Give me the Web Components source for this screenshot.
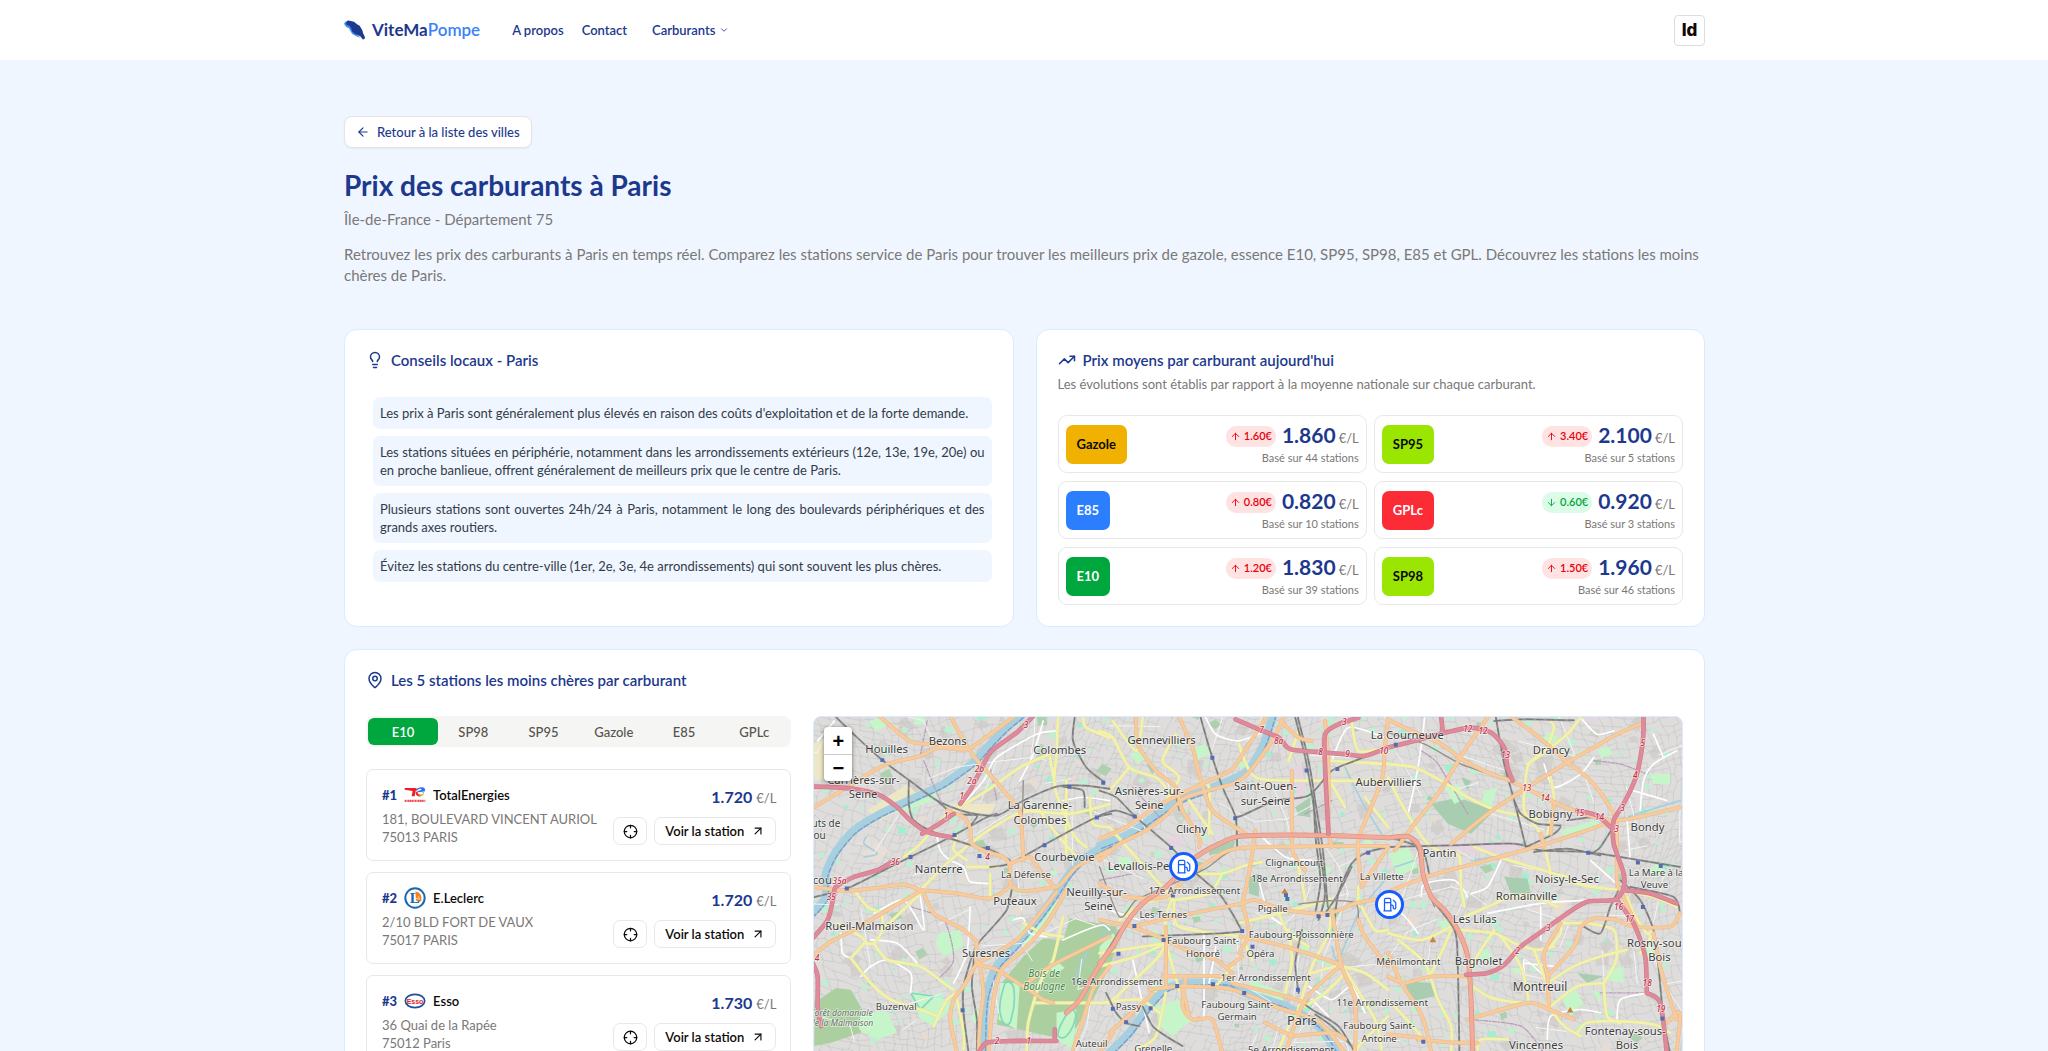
<!DOCTYPE html>
<html lang="fr">
<head>
<meta charset="utf-8">
<meta name="viewport" content="width=device-width, initial-scale=1">
<title>Prix des carburants à Paris - ViteMaPompe</title>
<style>
  :root {
    --navy: #1c398e;
    --muted: #7b7876;
    --line: #e8e8e8;
    --sky: #eff6ff;
    --sky-line: #dbeafe;
  }
  body {
    margin: 0;
    background: var(--sky);
    color: #0c0a09;
    font-family: Lato, "Open Sans", sans-serif;
    font-size: 13px;
    line-height: 18px;
  }
</style>
</head>
<body>
<fuel-page></fuel-page>

<script>
const ICONS = {
  left: '<path d="m12 19-7-7 7-7"/><path d="M19 12H5"/>',
  bulb: '<path d="M15 14c.2-1 .7-1.7 1.5-2.5 1-.9 1.5-2.2 1.5-3.5A6 6 0 0 0 6 8c0 1 .2 2.2 1.5 3.5.7.7 1.3 1.5 1.5 2.5"/><path d="M9 18h6"/><path d="M10 22h4"/>',
  trend: '<path d="M22 7l-8.500 8.500-5-5L2 17"/><path d="M16 7h6v6"/>',
  pin: '<path d="M20 10c0 5-5.500 10.200-7.400 11.800a1 1 0 0 1-1.200 0C9.500 20.200 4 15 4 10a8 8 0 0 1 16 0"/><circle cx="12" cy="10" r="3"/>',
  up: '<path d="m5 12 7-7 7 7"/><path d="M12 19V5"/>',
  down: '<path d="M12 5v14"/><path d="m19 12-7 7-7-7"/>',
  out: '<path d="M7 7h10v10"/><path d="M7 17 17 7"/>',
  chevron: '<path d="m6 9 6 6 6-6"/>',
  target: '<circle cx="12" cy="12" r="10"/><path d="M22 12h-4M6 12H2M12 6V2M12 22v-4"/>',
  fuel: '<path d="M3 22h12M4 9h10M14 22V4a2 2 0 0 0-2-2H6a2 2 0 0 0-2 2v18"/><path d="M14 13h2a2 2 0 0 1 2 2v2a2 2 0 0 0 4 0V9.830a2 2 0 0 0-.590-1.420L18 5"/>'
};
const BRANDS = {
  total: '<svg width="22" height="18" viewBox="0 0 66 54"><path d="M2 6h32l10 5-9 3-3 17h-9l3-16L2 11z" fill="#ef1c24"/><path d="M35 13C39 3 60 0 63 9c1 7-5 8-12 9l-12 1c1-5 8-5 13-7 3-2-2-6-8-3-4 1-6 4-9 4z" fill="#2f6df6"/><path d="M63 8c1 8-5 11-13 11l9 1c3-2 5-7 4-12z" fill="#27b5e8"/><path d="M35 17h6c-1 6 2 9 8 8l-2 6c-8 0-13-5-12-14z" fill="#ef1c24"/><path d="M46 26c6 0 10-2 12-5l2 3c-4 6-9 8-14 7z" fill="#f7a81b"/><path d="M38 26c3 4 10 5 17 2-5 5-13 5-17-2z" fill="#49b649"/><path d="M2 43h62M2 46h62" stroke="#e8323a" stroke-width="3" stroke-dasharray="5 1 3 1"/></svg>',
  leclerc: '<svg width="22" height="22" viewBox="0 0 66 66"><circle cx="33" cy="33" r="29" fill="#fff" stroke="#1769b5" stroke-width="6"/><path d="M34 14C44 13 51 21 52 31v10l-8 4-8-5z" fill="#f58220"/><path d="M43 28l4 10m-12-5l9 4" stroke="#fff" stroke-width="2"/><text x="17" y="49" font-family="Liberation Serif" font-weight="700" font-size="45" fill="#1769b5">L</text></svg>',
  esso: '<svg width="22" height="16" viewBox="0 0 66 48"><ellipse cx="33" cy="24" rx="29" ry="20" fill="#fff" stroke="#1d4fa0" stroke-width="5"/><text x="33" y="32" text-anchor="middle" font-family="Liberation Sans" font-weight="700" font-size="21" fill="#e1202c">Esso</text></svg>'
};

class Base extends HTMLElement {
  constructor() {
    super();
    this.attachShadow({ mode: 'open' });
  }
  connectedCallback() {
    this.shadowRoot.innerHTML = `<style>*{box-sizing:border-box}button{font:inherit;color:inherit;cursor:pointer}${this.css()}</style>${this.html()}`;
  }
  a(name) { return this.getAttribute(name) || ''; }
}
const define = (name, css, html) => customElements.define(name, class extends Base {
  css() { return css; }
  html() { return html(this); }
});

define('ui-icon', `
  :host { display: inline-flex; flex: none; }
  svg { display: block; }
`, e => `<svg aria-hidden="true" width="${e.a('size')}" height="${e.a('size')}" viewBox="0 0 24 24" fill="none" stroke="currentColor" stroke-width="${e.a('weight') || 2}" stroke-linecap="round" stroke-linejoin="round">${ICONS[e.a('name')]}</svg>`);

define('site-header', `
  :host { display: block; background: #fff; color: var(--navy); }
  header { max-width: 1402px; height: 60px; margin: 0 auto; padding: 0 20px 0 21px; display: flex; align-items: center; justify-content: space-between; }
  .left, .brand, nav, nav button { display: flex; align-items: center; }
  .left { gap: 32px; }
  a { color: inherit; text-decoration: none; }
  .brand { gap: 7px; font-size: 17px; font-weight: 700; line-height: 24px; }
  .brand b { color: #3b82f6; font-weight: 600; }
  nav { font-weight: 600; gap: 18px; }
  nav button { border: 0; background: none; padding: 0 0 0 7px; gap: 4px; }
  .id { width: 31px; height: 31px; border: 1px solid #ddd; border-radius: 4px; background: #fff; padding: 0; color: #120606; font: 800 17px/24px Inter, sans-serif; }
`, () => `<header>
  <div class="left">
    <a class="brand" href="#"><svg width="21" height="20" viewBox="0 0 63 60"><path d="M0 11 5 4l14 13 9 18 13 11 10 8-14-5-13-8-9-16-9-5z" fill="#3b8bff"/><path d="M8 4Q11 0 17 2l13 3 9 8 8 4 8 14 2 8 6 13q0 7-7 6l-7-9-15-7-9-7-3-8-5-9-9-4q-3-3-1-7z" fill="#1c398e"/></svg><span>ViteMa<b>Pompe</b></span></a>
    <nav><a href="#">A propos</a><a href="#">Contact</a><button type="button">Carburants <ui-icon name="chevron" size="10"></ui-icon></button></nav>
  </div>
  <button class="id" type="button">Id</button>
</header>`);

define('ui-card', `
  :host { display: block; background: #fff; border: 1px solid var(--sky-line); border-radius: 13px; padding: 19px 21px 21px; }
  h2 { display: flex; align-items: center; gap: 7px; height: 22px; margin: 0; font-size: 15px; font-weight: 600; line-height: 22px; color: var(--navy); }
`, e => `<h2><ui-icon name="${e.a('icon')}" size="18"></ui-icon>${e.a('heading')}</h2><slot></slot>`);

define('tip-list', `
  :host { display: block; padding: 26px 0 0 7px; }
  ul { margin: 0; padding: 0; list-style: none; display: grid; gap: 7px; }
  ::slotted(li) { padding: 7px; border-radius: 7px; background: var(--sky); color: #333b47; text-align: justify; list-style: none; }
`, () => '<ul><slot></slot></ul>');

define('fuel-price', `
  :host { display: flex; justify-content: space-between; align-items: center; height: 58px; padding: 0 7px; border: 1px solid var(--line); border-radius: 9px; }
  .badge { height: 39px; display: flex; align-items: center; padding: 0 11px; border-radius: 7px; font-weight: 700; }
  .badge.gazole { background: #f0b100; }
  .badge.sp95, .badge.sp98 { background: #9ae600; }
  .badge.e85 { background: #2b7fff; color: #fff; }
  .badge.gplc { background: #fb2c36; color: #fff; }
  .badge.e10 { background: #00a63e; color: #fff; }
  .info { text-align: right; }
  .row { display: flex; align-items: center; justify-content: flex-end; gap: 6px; height: 28px; }
  .delta { display: flex; align-items: center; gap: 3px; height: 21px; padding: 0 4px; border-radius: 10px; font-size: 11px; font-weight: 600; background: #ffe2e2; color: #e7000b; }
  .delta.down { background: #dcfce7; color: #00a63e; }
  .price { display: flex; align-items: baseline; gap: 3px; color: var(--navy); font-size: 21px; line-height: 28px; font-weight: 700; }
  small { color: var(--muted); font-size: 13px; font-weight: 400; }
  .base { color: var(--muted); font-size: 11px; line-height: 16px; }
`, e => `<span class="badge ${e.a('fuel').toLowerCase()}">${e.a('fuel')}</span>
  <div class="info"><div class="row"><span class="delta ${e.a('trend')}"><ui-icon name="${e.a('trend')}" size="11"></ui-icon>${e.a('delta')}</span><span class="price">${e.a('price')} <small>€/L</small></span></div>
  <div class="base">Basé sur ${e.a('count')} stations</div></div>`);

define('fuel-tabs', `
  :host { display: grid; grid-template-columns: repeat(6, 1fr); height: 31px; padding: 2px; border-radius: 8px; background: #f5f5f4; }
  button { border: 0; border-radius: 6px; padding: 0; background: none; color: #57534d; font-weight: 500; }
  button[aria-selected=true] { background: #00a63e; color: #fff; font-weight: 600; }
`, () => ['E10', 'SP98', 'SP95', 'Gazole', 'E85', 'GPLc'].map((n, i) => `<button type="button" role="tab" aria-selected="${!i}">${n}</button>`).join(''));

define('station-card', `
  :host { display: flex; justify-content: space-between; height: 92px; padding: 14px 14px 10px 15px; border: 1px solid var(--line); border-radius: 7px; }
  .name { display: flex; align-items: center; gap: 7px; height: 22px; font-weight: 600; }
  .name b { color: var(--navy); }
  .name svg { display: block; }
  address { margin-top: 4px; font-style: normal; color: var(--muted); white-space: nowrap; }
  .side { display: flex; flex-direction: column; align-items: flex-end; gap: 6px; }
  .price { display: flex; align-items: baseline; gap: 4px; font-size: 16px; line-height: 26px; font-weight: 700; color: var(--navy); }
  small { font-size: 13px; font-weight: 400; color: var(--muted); }
  .actions { display: flex; gap: 7px; }
  .actions > * { display: flex; align-items: center; justify-content: center; height: 28px; border: 1px solid var(--line); border-radius: 7px; background: #fff; color: #0c0a09; text-decoration: none; font-weight: 600; }
  button { width: 34px; padding: 0; }
  a { padding: 0 10px; gap: 7px; }
`, e => `<div><div class="name"><b>${e.a('rank')}</b>${BRANDS[e.a('logo')]}<span>${e.a('name')}</span></div><address>${e.a('street')}<br>${e.a('town')}</address></div>
  <div class="side"><div class="price">${e.a('price')} <small>€/L</small></div>
  <div class="actions"><button type="button" aria-label="Localiser"><ui-icon name="target" size="15"></ui-icon></button><a href="#">Voir la station <ui-icon name="out" size="14"></ui-icon></a></div></div>`);

/* ---- map ---- */
/* Each map is three sheets of 870 units side by side; three units make one CSS pixel. */
let seed = 7;
const rnd = () => (seed = (seed * 16807) % 2147483647) / 2147483647;
const warp = (x, y) => [
  Math.round(x + 55 * Math.sin(y / 140 + x / 400) + 20 * Math.sin(x / 90)),
  Math.round(y + 55 * Math.sin(x / 170) + 18 * Math.cos(y / 70 + x / 200))
];
function mesh(step, keep) {
  const at = [];
  const cols = Math.ceil(2900 / step), rows = Math.ceil(1350 / step);
  for (let j = 0; j < rows; j++) for (let i = 0; i < cols; i++)
    at.push(warp(-120 + i * step + (rnd() - .5) * step * .6, -120 + j * step + (rnd() - .5) * step * .6));
  let d = '';
  for (let j = 0; j < rows - 1; j++) for (let i = 0; i < cols - 1; i++) {
    const p = at[j * cols + i], q = at[j * cols + i + 1], r = at[(j + 1) * cols + i];
    if (rnd() < keep) d += `M${p}L${q}`;
    if (rnd() < keep) d += `M${p}L${r}`;
  }
  return d;
}
function patches(n, size) {
  let d = '';
  for (let k = 0; k < n; k++) {
    const x = Math.round(rnd() * 2600), y = Math.round(40 + rnd() * 1010), s = size * (.4 + rnd()), t = rnd() * 3;
    d += 'M' + [0, 1, 2, 3].map(c => [Math.round(x + Math.cos(t + c * 1.57) * s * (.7 + rnd() * .6)), Math.round(y + Math.sin(t + c * 1.57) * s * (.6 + rnd() * .5))]).join('L') + 'z';
  }
  return d;
}
/* Turns "x,y x,y ..." runs (split by "|") into smooth curves; o shifts a sheet. */
function curve(s, o = 0) {
  return s.split('|').map(run => {
    const p = run.trim().split(/\s+/).map(t => { const c = t.split(','); return [+c[0] + o, +c[1]]; });
    let d = `M${p[0]}`;
    for (let i = 0; i < p.length - 1; i++) {
      const a = p[i - 1] || p[i], b = p[i], c = p[i + 1], e = p[i + 2] || c;
      const f = v => Math.round(v);
      d += `C${f(b[0] + (c[0] - a[0]) / 8)},${f(b[1] + (c[1] - a[1]) / 8)} ${f(c[0] - (e[0] - b[0]) / 8)},${f(c[1] - (e[1] - b[1]) / 8)} ${c}`;
    }
    return d;
  }).join('');
}
const sheets = (a, b, c) => curve(a) + (b ? curve(b, 870) : '') + (c ? curve(c, 1740) : '');
const poly = (s, o = 0) => s.split('|').map(r => 'M' + r.trim().split(/\s+/).map(t => { const c = t.split(','); return (+c[0] + o) + ',' + c[1]; }).join('L') + 'z').join('');

const SEINE = sheets(
  '650,30 590,80 540,130 490,185 400,250 290,302 200,345 130,390 75,455 45,520 45,590 5,640|900,432 830,470 780,520 740,580 690,650 620,735 560,800 530,880 522,960 520,1060',
  '0,437 90,400 170,345 240,300 330,265 440,215 490,140 525,40|20,1070 90,1000 150,920 200,868 260,850 350,848 390,852 440,880 560,920 660,980 720,1070');
const WHITE = sheets(
  '740,90 680,100 560,170 520,240 440,330|380,410 390,450 420,480 460,500 480,545 545,550|190,640 280,600 340,690 325,560|480,620 470,760 430,850|610,660 640,655 660,700 710,710|760,720 830,690 880,675 900,690|150,830 180,800 230,780 300,820 300,880|90,700 95,760 120,775|180,720 260,730 320,790|700,60 670,160 630,240|760,300 820,290 900,300|20,120 70,60',
  '320,50 350,100 420,120 500,90|315,700 315,960|100,780 150,1000|480,540 510,640 560,680|630,860 700,900 760,860 800,940|640,900 690,950|700,180 750,80 860,110|480,400 560,470 640,480|0,620 60,640 120,660|350,740 330,850',
  '110,50 90,200 60,340|470,190 500,260 580,220 620,170|760,330 770,240 800,190 870,150|740,270 840,300|720,350 730,480|0,600 60,660 90,700|100,590 110,550 200,540 240,590|300,640 460,610 600,600|460,620 460,720|410,790 500,800|425,910 410,780 490,850|480,1020 490,950 580,930 640,940|690,960 700,900 780,880|610,480 700,560|340,480 300,560 250,580|580,50 630,100 680,90|800,100 830,170');
const YELLOW = sheets(
  '745,50 740,160 735,260 790,400 830,440|735,250 720,170|430,330 530,270 630,200 720,160|330,570 420,480 520,400 620,340 690,330|280,470 330,430 410,340|440,405 430,450 470,480|640,330 770,340 830,330 900,310|770,240 768,400 770,460|690,330 740,400 800,470|130,570 170,620 210,640 215,690 190,730 160,730|215,690 340,570|120,775 160,730 150,710 80,670|190,730 230,780 330,800 400,850 430,870|120,775 180,850 240,900 330,930 380,950|370,980 410,900 440,880|460,1050 460,1000 440,900|470,500 560,500|640,670 700,700 760,710|760,650 730,780 690,850 655,970 650,1060|670,910 780,910 900,910|820,50 830,80 900,110|840,290 850,370 900,380|540,590 540,520',
  '0,90 40,110 90,200 170,230 200,260|40,60 110,150 130,50|230,100 190,180 240,230 200,300|90,200 30,270|330,400 330,260 300,240|270,300 340,400|30,380 100,460 180,550 220,590|280,520 370,520 440,495 490,485|370,520 330,580 220,600|420,130 470,230 640,240 870,240|690,180 870,190|220,590 130,610 60,660|220,590 200,650 195,720|200,730 0,760|200,730 110,770 0,800|200,730 240,870|200,730 170,780 40,900|225,600 240,680 430,710|430,710 460,780|420,670 540,640 700,600|540,640 570,700 630,740|560,880 580,780 570,690|700,600 690,700 640,800 590,960|640,820 720,800 800,820 870,870|790,620 830,690 870,690|540,1050 570,980|780,560 780,620|600,500 620,600|350,860 400,800|740,320 700,250|0,910 120,900 180,940|740,810 830,960 850,1050|800,290 870,380|760,60 780,150 870,140|600,90 570,180|200,880 170,1010 110,1053|870,950 790,1030 770,1060|620,920 680,880 740,820',
  '0,230 40,310 110,420 150,450|0,190 80,200 160,240 240,290 330,330 450,355|580,50 540,100 450,170 420,200 410,330 460,400 490,520|480,140 420,190|490,60 500,80 480,140|490,230 500,300 480,400|260,440 350,475 500,520 540,530|540,540 610,560 700,570 800,590 870,620|180,450 215,470 220,560 230,620|230,650 300,620 370,590 440,590 510,620|210,690 320,700 380,730 450,750 500,740|320,690 250,800 240,850|340,710 400,800 425,910|520,670 520,700 490,740|440,750 480,860 480,920|520,670 600,670 680,690 690,760 680,800 650,850|490,920 570,860 650,850|480,850 560,800 640,770 720,750|650,850 660,950 700,970|570,1000 600,970 690,965 800,975 850,1000|490,930 530,980 580,1010|240,850 300,890 360,905 425,910|0,700 100,720 190,680|30,720 110,790 150,900 190,980 190,1060|190,690 160,760 130,820|270,1050 280,1020 360,1020|0,900 100,1010|720,590 740,640 780,700 800,690|800,700 760,760');
const ORANGE = sheets(
  '5,322 110,260 180,215 235,188 330,165 385,140 470,145 540,100 620,40|205,45 300,122 385,130 470,145|420,45 455,110 490,165 560,245 610,305 632,340 640,480|10,560 110,572 200,563 280,553 335,570 440,580 540,595 600,560|5,768 60,725 130,690 230,630 335,570|335,570 370,640 420,668 460,690 500,725|410,330 460,350 480,385 485,430 530,455 580,470 600,500 600,550 630,572 690,568 740,560|600,490 660,470 680,500 740,560 800,500 900,450|740,575 690,640 620,720 540,770 500,790|770,570 710,670 640,750 575,810 550,900 535,1060|500,725 500,790 560,810 640,860 700,900|500,790 460,860 430,900 420,960 440,1060|640,860 720,800 900,710|510,800 520,880 510,960 505,1060|700,900 730,910|900,800 850,870 820,960 790,1050',
  '0,480 60,430 140,390 200,345 260,290 400,250 450,215 520,120 555,50|0,415 80,380 160,325 235,285 330,240 400,205 450,130 500,50|110,50 115,130 170,210 230,260 250,330 300,410 300,440|240,50 280,140 300,220 340,330 440,400|0,550 80,590 200,590 260,530|260,530 320,490 410,445 690,437 870,437|580,210 580,430 590,470 620,510|680,60 690,200 690,380 700,440|470,390 450,520 430,610|430,610 230,650 100,680|430,610 470,600 560,630 690,640 770,610 870,590|430,610 450,700 420,760|100,680 200,720 260,750 350,780 400,820|0,660 100,680|200,680 200,860|190,830 380,830 400,850 440,860 560,890 620,910|150,870 250,860 400,870 540,925 660,965 740,1060|260,830 250,920 280,960 340,960 370,1060|425,710 560,740 730,795|700,630 730,800 770,900 770,1060|730,795 620,900 560,1060|780,410 780,470 790,550|780,410 850,240 860,140 870,50|780,660 800,710 870,800|580,1010 700,1000 740,1020|500,970 580,1010|30,1000 120,920 160,880|0,1060 40,1000|870,440 790,560|390,800 430,770|250,870 270,950|545,60 600,110 640,120',
  '0,55 60,85 160,130 230,180 300,215 370,240|300,50 230,150 150,280 80,370 20,450|375,50 430,90 490,140 540,185|770,65 690,100 620,140 540,185 420,260 300,340 190,430|540,185 600,230 650,290 690,355|370,240 470,290 560,330 690,360 880,320|0,575 130,525 280,485 460,435 600,390 690,355|690,370 690,540 700,570 750,680|490,400 500,310|460,400 470,440|520,670 470,760 480,830 485,930|580,680 620,655 690,660 740,680 850,680 880,640|580,680 560,740 480,830|0,830 50,850 130,830 240,830|240,960 420,910 485,930 560,960|0,760 40,850 80,910 110,970 130,1060|90,1020 200,1030 270,1030|0,1005 100,1015|800,700 820,800 850,900 870,960|840,970 880,940 870,1053');
const TRUNK = sheets('900,750 850,830 810,900 770,940',
  '290,470 340,440 410,410 480,405 690,405 870,412|260,500 200,560 130,610 80,670 40,740 0,790',
  '0,412 60,408 95,440 105,520 130,590 170,630 210,690 240,770 250,900 255,1060');
const MOTOR = sheets(
  '5,258 80,260 150,268 210,285 260,320 300,360 350,395 420,410|670,45 620,95 545,150 515,200 485,260 450,310|430,340 370,380 335,400|5,715 50,660 68,590 75,560 130,530 200,510 245,485|5,790 20,830 20,920 30,980|505,1060 530,1030 600,1025 740,1025|735,990 735,1025',
  '410,55 480,85 540,110 575,145 680,155 740,160 800,165 870,140|690,400 680,200 680,100 720,70 780,50',
  '0,140 100,115 160,98 250,80 310,95 350,140 360,200 375,240|160,50 165,95|770,45 768,120 750,220 710,310 680,360 680,430 710,520 708,570 680,600 600,605 540,640 470,690 400,740 350,795 300,820 235,825|708,570 790,580 870,610|690,600 740,670 775,770 780,880|780,880 820,910 840,1060|570,330 630,345 670,380');
const RAIL = sheets(
  '75,48 150,120 215,178 295,238 380,300 470,335 560,345 640,300 740,258 830,255 900,265|5,592 108,565 200,520 300,470 430,405 530,350 560,340|295,238 295,310 310,360 380,400 500,440 535,445 600,480|380,300 430,340 500,345 480,380 485,430|905,340 850,355 700,435 600,490 540,500|605,570 590,630 540,690 495,745 460,860 460,940 475,1060|495,745 485,860 500,960 500,1060|795,50 790,120 830,200 885,245|760,258 820,270 825,320',
  '0,270 50,290 110,350 220,445 280,510 360,580 400,640 430,695|305,50 340,170 375,270 410,350 415,440|0,345 50,330 110,350|590,50 620,170 640,280 660,420 680,580 660,660|598,50 630,180 650,300 672,440 688,620|645,290 652,420 666,540 650,640|680,640 720,580 760,500|410,350 430,345 530,300 630,285 700,210 770,180 870,140|705,690 720,580 760,490 810,455 870,440|600,880 590,790 610,690|600,900 640,930 720,980 770,1060|650,945 700,980 760,1040|130,920 160,980 200,1010 250,1040|20,880 50,940 80,970 120,980|370,700 130,710|370,700 430,695',
  '325,50 350,190 380,300 415,440|0,440 200,435 380,430 460,450 600,455 700,470 880,500|440,455 540,445 640,465|0,410 100,445 125,530|320,60 420,55 560,58|415,440 500,400 520,380|380,300 400,340 450,370 520,375|690,360 640,440 610,460|700,540 760,600 800,690 815,800 830,960 850,1060|730,560 860,590 880,640|125,590 200,690 210,800 215,1060|590,680 640,700 670,620 700,560|690,370 620,350 540,360');
const LABELS = [
  [228, 158, 34, 'Houilles'], [412, 133, 34, 'Bezons'], [750, 161, 34, 'Colombes'], [158, 249, 34, 'Carrières-sur-'], [157, 293, 34, 'Seine'],
  [690, 325, 34, 'La Garenne-'], [690, 370, 34, 'Colombes'], [45, 380, 30, 'uts de'], [26, 417, 30, 'ou'], [34, 550, 34, 'cou'],
  [385, 517, 34, 'Nanterre'], [764, 483, 34, 'Courbevoie'], [648, 533, 29, 'La Défense'], [615, 614, 34, 'Puteaux'], [861, 587, 34, 'Neuilly-sur-'], [867, 630, 34, 'Seine'],
  [176, 690, 34, 'Rueil-Malmaison'], [528, 771, 34, 'Suresnes'], [257, 931, 29, 'Buzenval'], [922, 857, 29, '16e Arrondissement'], [846, 1042, 29, 'Auteuil'],
  [1057, 129, 34, 'Gennevilliers'], [1020, 282, 34, 'Asnières-sur-'], [1020, 326, 34, 'Seine'], [1370, 269, 34, 'Saint-Ouen-'], [1370, 313, 34, 'sur-Seine'], [1147, 399, 34, 'Clichy'],
  [1017, 510, 34, 'Levallois-Perret'], [1457, 498, 29, 'Clignancourt'], [1465, 545, 29, '18e Arrondissement'], [1156, 582, 29, '17e Arrondissement'],
  [1062, 654, 29, 'Les Ternes'], [1392, 637, 29, 'Pigalle'], [1182, 733, 29, 'Faubourg Saint-'], [1182, 771, 29, 'Honoré'], [1478, 713, 29, 'Faubourg-Poissonnière'],
  [1355, 772, 29, 'Opéra'], [1371, 845, 29, '1er Arrondissement'], [957, 930, 29, 'Passy'], [1285, 925, 29, 'Faubourg Saint-'], [1285, 963, 29, 'Germain'],
  [1480, 978, 39, 'Paris'], [1032, 1057, 29, 'Grenelle'], [1447, 1060, 29, '5e Arrondissement'], [1721, 540, 29, 'La Villette'],
  [1798, 113, 34, 'La Courneuve'], [1741, 257, 34, 'Aubervilliers'], [1801, 797, 29, 'Ménilmontant'], [1722, 919, 29, '11e Arrondissement'], [1713, 990, 29, 'Faubourg Saint-'], [1713, 1028, 29, 'Antoine'],
  [2232, 159, 34, 'Drancy'], [2229, 354, 34, 'Bobigny'], [2522, 392, 34, 'Bondy'], [1895, 470, 34, 'Pantin'], [2279, 549, 34, 'Noisy-le-Sec'],
  [2157, 601, 34, 'Romainville'], [2001, 669, 34, 'Les Lilas'], [2548, 527, 29, 'La Mare à la'], [2543, 564, 29, 'Veuve'], [2556, 741, 34, 'Rosny-sous-'],
  [2558, 784, 34, 'Bois'], [2013, 796, 34, 'Bagnolet'], [2198, 873, 36, 'Montreuil'], [2455, 1007, 34, 'Fontenay-sous-'], [2460, 1050, 34, 'Bois'], [2186, 1048, 34, 'Vincennes']
];
const EXITS = [[648,82,'3'],[508,214,'2b'],[485,250,'2a'],[455,296,'1'],[407,356,'1'],[532,480,'4'],[254,494,'36'],[86,553,'35a'],[61,600,'35'],[18,785,'4'],[561,1034,'2'],[657,1034,'1'],
  [1358,96,'7'],[1410,130,'8a'],[1536,164,'8'],[1618,168,'9'],[1727,160,'10'],[1608,72,'3'],[1980,92,'12'],[2026,100,'12'],[2094,173,'13'],[2158,272,'13'],[2213,302,'14'],[2318,347,'15'],[2377,360,'14'],
  [2508,136,'5'],[2485,232,'4'],[2447,330,'3'],[2429,395,'3'],[2435,630,'16'],[2468,665,'17'],[2223,692,'3'],[2130,763,'2'],[2521,858,'18'],[2562,938,'19']];
const STOPS = [[215,178],[108,565],[300,470],[433,404],[533,443],[508,467],[704,435],[779,258],[862,351],[881,246],[457,932],[976,348],[1086,443],[1210,171],[1279,353],[1494,209],[1587,205],[1091,586],[975,678],[1063,720],[1300,693],[1331,741],[1212,854],[1104,859],[1306,880],[1436,597],[1432,585],[1530,649],[1557,645],[1680,457],[910,928],[950,968],[1024,926],[1468,870],[1763,132],[2343,457],[2493,487],[2562,497],[2508,621],[2567,957],[1846,1027],[927,762]];

define('city-map', `
  :host { display: block; position: relative; overflow: hidden; border: 1px solid var(--sky-line); border-radius: 8px; background: #dcdcdc; }
  .sheet { position: absolute; inset: 0; width: 100%; height: 100%; display: block; }
  .zoom { position: absolute; left: 10px; top: 10px; width: 28px; border-radius: 4px; background: #fff; box-shadow: 0 1px 4px rgba(0,0,0,.5); display: grid; }
  .zoom button { height: 27px; padding: 0; border: 0; background: none; font: 700 20px/26px "Liberation Sans", sans-serif; color: #000; }
  .zoom button + button { border-top: 1px solid #ccc; }
  .spot { position: absolute; width: 29px; height: 29px; margin: -15px 0 0 -15px; padding: 0; border: 3px solid #155dfc; border-radius: 50%; background: #fff; color: #155dfc; display: flex; align-items: center; justify-content: center; }
`, () => `<svg class="sheet" viewBox="9 48 2616 1053" preserveAspectRatio="xMinYMin slice" fill="none" stroke-linecap="round" stroke-linejoin="round">
  <path d="M0 0h2640v1120H0z" fill="#dedddc"/>
  <path d="${patches(150, 26)}" fill="#d3d0cd"/>
  <path d="${mesh(25, .8)}" stroke="#c8c8c8" stroke-width="2"/>
  <path d="${patches(60, 16)}" fill="#e7dccf"/><path d="${patches(330, 12)}" fill="#bdf0d0"/><path d="${patches(70, 13)}" fill="#a5edcf"/><path d="${patches(40, 17)}" fill="#aed0ae"/>
  <path d="${poly('5,130 50,110 60,230 10,240|170,330 290,250 330,290 210,360|420,310 560,310 540,340 460,335')}" fill="#eee7c6"/>
  <path d="${poly('200,425 235,450 200,490 150,460|130,430 175,415 180,440')}" fill="#eaded8"/>
  <path d="${poly('570,200 610,190 625,300 600,290|190,420 240,400 250,440 210,440', 870)}${poly('120,430 400,425 380,450 240,460|580,50 630,50 620,70', 1740)}" fill="#e6d5e1"/>
  <path d="${poly('780,655 920,680 925,730 900,800 850,900 800,985 740,1015 560,975 575,850 640,770 700,715 760,722|10,910 75,865 120,870 155,930 150,1000 60,1030 10,1040')}" fill="#accf9f"/>
  <path d="${poly('150,940 230,935 260,1000 200,1020 145,990|295,870 440,910 370,980 330,960|385,700 450,690 460,740 400,770 375,730|570,850 630,850 620,990 565,960|640,680 760,590 730,650 650,740 600,740|250,330 390,260 370,300 260,340|740,940 800,930 790,1050 740,1020')}" fill="#c5f5c9"/>
  <path d="${poly('590,320 635,290 635,350 600,345|450,530 480,520 480,590 450,580|0,660 45,690 35,740 0,780|330,440 410,420 400,450 330,465|140,190 170,200 160,220', 870)}${poly('130,310 210,290 320,330 250,400 180,370|350,530 420,535 430,580 370,580|50,845 135,850 140,890 70,905|220,230 250,240 240,270|570,820 650,830 600,850', 1740)}" fill="#a9cdb0"/>
  <path d="${poly('170,920 240,900 280,960 220,1010 180,980|450,840 560,880 550,910 460,880|400,190 460,180 450,210|0,740 40,700 60,720 0,800', 870)}${poly('0,460 60,440 90,500 30,530|520,390 620,360 640,370 530,410|520,890 560,860 590,910 550,950|660,810 710,800 710,850 660,840|290,270 330,260 310,320 280,310|790,220 850,220 850,250 800,250|170,260 210,250 240,290 200,310|610,870 640,880 640,910', 1740)}" fill="#c5f5c9"/>
  <path d="${poly('490,610 530,590 540,620 510,650', 1740)}" fill="#eaded0"/>
  <g stroke="#7ed9bd" stroke-width="5"><path d="M585 850q-20 60-15 90 10 50 30 30 20-60 10-110-10-20-25-10M780 930q-40 60-35 80 20 20 45-30 20-50-10-50M300 880l70 10-40 40z"/></g>
  <path d="${patches(26, 20)}" fill="#c5f5c9"/>
  <path d="${sheets('165,410 160,430 200,460 160,470|815,800 830,760 790,850', '700,740 720,780 780,640 860,540|740,200 800,320 850,400', '250,480 400,455 560,400 880,300|20,500 80,480')}" stroke="#a3cfe0" stroke-width="5"/>
  <path d="${SEINE}" stroke="#a6cfdf" stroke-width="25"/>
  <path d="${SEINE}" stroke="#7e9ac6" stroke-width="4" stroke-dasharray="15 7" transform="translate(6 7)"/>
  <path d="${sheets('340,180 390,300 420,340|540,200 560,300|350,60 330,160|300,620 400,660 430,780 380,840', '190,360 100,260|620,340 700,300|0,540 100,520', '100,150 150,190 240,340|620,180 700,190 780,220|470,1060 400,980 250,960|640,880 780,880')}" stroke="#b99fb9" stroke-width="4" stroke-dasharray="12 5 4 5"/>
  <path d="${mesh(105, .25)}" stroke="#f4f4f4" stroke-width="3"/>
  <path d="${WHITE}" stroke="#fff" stroke-width="5"/>
  <path d="${YELLOW}" stroke="#dfdca0" stroke-width="10"/><path d="${YELLOW}" stroke="#f3f2ab" stroke-width="8"/>
  <path d="${RAIL}" stroke="#959595" stroke-width="6"/><path d="${RAIL}" stroke="#757575" stroke-width="3" stroke-dasharray="20 12"/>
  <path d="${sheets('640,240 636,400 640,470', '0,500 60,650 110,600 200,560 320,505 410,447 600,440 700,432 870,440|600,612 690,602 760,605 778,620 780,670|0,790 60,690|225,270 240,330', '0,95 110,130 220,190 370,240|60,410 90,450 105,540 140,620')}" stroke="#958f88" stroke-width="4"/>
  <path d="${ORANGE}" stroke="#e8b88a" stroke-width="12"/><path d="${ORANGE}" stroke="#f8cb9c" stroke-width="9"/>
  <path d="${TRUNK}" stroke="#dc9080" stroke-width="15"/><path d="${TRUNK}" stroke="#f2ab98" stroke-width="11"/>
  <path d="${MOTOR}" stroke="#d27a8b" stroke-width="14"/><path d="${MOTOR}" stroke="#de8a9a" stroke-width="10"/>
  <path d="${STOPS.map(s => `M${s[0] - 6} ${s[1] - 6}h12v12h-12z`).join('')}" fill="#566cb0"/>
  <path d="M1428 564l10 16h-20zM1875 710l10 17h-20zM2289 922l10 17h-20z" fill="#c8843c"/>
  <g font-family="Noto Sans" text-anchor="middle" fill="#3d3d3d" stroke="#fff" stroke-opacity=".6" stroke-width="5" paint-order="stroke">
  ${LABELS.map(l => `<text x="${l[0]}" y="${l[1]}" font-size="${l[2]}">${l[3]}</text>`).join('')}
  <g fill="#c03448" font-size="25" font-style="italic" font-weight="500">${EXITS.map(l => `<text x="${l[0]}" y="${l[1]}">${l[2]}</text>`).join('')}</g>
  <g fill="#3d8a45" font-size="30" font-style="italic"><text x="703" y="831">Bois de</text><text x="703" y="870">Boulogne</text></g>
  <g fill="#60715f" font-size="26" font-style="italic"><text x="92" y="948">Forêt domaniale</text><text x="92" y="979">de la Malmaison</text></g></g>
</svg>
<div class="zoom"><button type="button" aria-label="Zoom avant">+</button><button type="button" aria-label="Zoom arrière">−</button></div>
<button class="spot" type="button" aria-label="Station E.Leclerc" style="left:42.6%;top:43%"><ui-icon name="fuel" size="15"></ui-icon></button>
<button class="spot" type="button" aria-label="Station" style="left:66.4%;top:54%"><ui-icon name="fuel" size="15"></ui-icon></button>`);

define('fuel-page', `
  :host { display: block; }
  main { max-width: 1402px; margin: 0 auto; padding: 56px 20px 56px 21px; }
  .back { display: inline-flex; align-items: center; gap: 7px; height: 32px; padding: 0 11px; border: 1px solid #e7e5e4; border-radius: 8px; background: #fff; color: var(--navy); text-decoration: none; font-weight: 500; box-shadow: 0 1px 2px rgba(0,0,0,.05); }
  h1 { margin: 20px 0 0; font-size: 28px; line-height: 34px; font-weight: 700; color: var(--navy); }
  p { margin: 0; color: var(--muted); }
  .place { margin-top: 6px; font-size: 15px; line-height: 22px; }
  .intro { margin-top: 14px; font-size: 15px; line-height: 21px; }
  .pair { display: grid; grid-template-columns: 1fr 1fr; gap: 22px; margin: 43px 0 22px; }
  .note { margin-top: 4px; }
  .prices { display: grid; grid-template-columns: 1fr 1fr; gap: 8px 7px; margin-top: 22px; }
  .split { display: grid; grid-template-columns: 426fr 871fr; gap: 22px; margin-top: 25px; }
  .list { display: grid; gap: 11px; margin-top: 22px; }
`, () => `<site-header></site-header>
<main>
  <a class="back" href="#"><ui-icon name="left" size="14"></ui-icon>Retour à la liste des villes</a>
  <h1>Prix des carburants à Paris</h1>
  <p class="place">Île-de-France - Département 75</p>
  <p class="intro">Retrouvez les prix des carburants à Paris en temps réel. Comparez les stations service de Paris pour trouver les meilleurs prix de gazole, essence E10, SP95, SP98, E85 et GPL. Découvrez les stations les moins chères de Paris.</p>
  <div class="pair">
    <ui-card icon="bulb" heading="Conseils locaux - Paris">
      <tip-list>
        <li>Les prix à Paris sont généralement plus élevés en raison des coûts d'exploitation et de la forte demande.</li>
        <li>Les stations situées en périphérie, notamment dans les arrondissements extérieurs (12e, 13e, 19e, 20e) ou en proche banlieue, offrent généralement de meilleurs prix que le centre de Paris.</li>
        <li>Plusieurs stations sont ouvertes 24h/24 à Paris, notamment le long des boulevards périphériques et des grands axes routiers.</li>
        <li>Évitez les stations du centre-ville (1er, 2e, 3e, 4e arrondissements) qui sont souvent les plus chères.</li>
      </tip-list>
    </ui-card>
    <ui-card icon="trend" heading="Prix moyens par carburant aujourd'hui">
      <p class="note">Les évolutions sont établis par rapport à la moyenne nationale sur chaque carburant.</p>
      <div class="prices">
        <fuel-price fuel="Gazole" trend="up" delta="1.60€" price="1.860" count="44"></fuel-price>
        <fuel-price fuel="SP95" trend="up" delta="3.40€" price="2.100" count="5"></fuel-price>
        <fuel-price fuel="E85" trend="up" delta="0.80€" price="0.820" count="10"></fuel-price>
        <fuel-price fuel="GPLc" trend="down" delta="0.60€" price="0.920" count="3"></fuel-price>
        <fuel-price fuel="E10" trend="up" delta="1.20€" price="1.830" count="39"></fuel-price>
        <fuel-price fuel="SP98" trend="up" delta="1.50€" price="1.960" count="46"></fuel-price>
      </div>
    </ui-card>
  </div>
  <ui-card icon="pin" heading="Les 5 stations les moins chères par carburant">
    <div class="split">
      <div>
        <fuel-tabs role="tablist"></fuel-tabs>
        <div class="list">
          <station-card rank="#1" logo="total" name="TotalEnergies" street="181, BOULEVARD VINCENT AURIOL" town="75013 PARIS" price="1.720"></station-card>
          <station-card rank="#2" logo="leclerc" name="E.Leclerc" street="2/10 BLD FORT DE VAUX" town="75017 PARIS" price="1.720"></station-card>
          <station-card rank="#3" logo="esso" name="Esso" street="36 Quai de la Rapée" town="75012 Paris" price="1.730"></station-card>
        </div>
      </div>
      <city-map></city-map>
    </div>
  </ui-card>
</main>`);
</script>
</body>
</html>
